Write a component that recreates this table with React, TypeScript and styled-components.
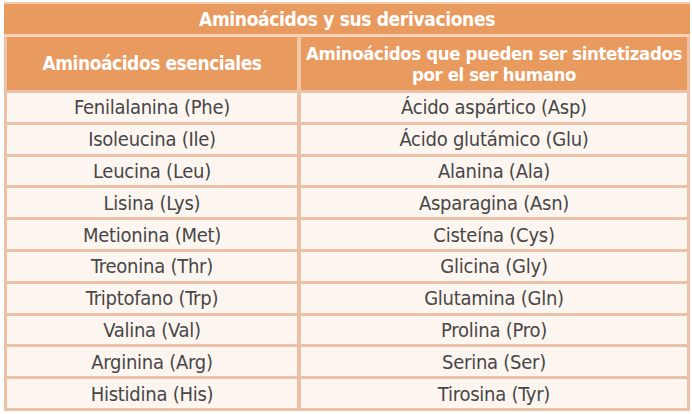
import React from "react";
import styled, { createGlobalStyle } from "styled-components";

const Global = createGlobalStyle`
  html, body { margin: 0; padding: 0; background: #ffffff; }
  body { width: 692px; height: 414px; overflow: hidden; }
`;

const FONT = `"Liberation Sans Narrow", "DejaVu Sans Condensed", "Liberation Sans", sans-serif`;

const Table = styled.div`
  margin: 2px 0 0 4px;
  width: 686px;
  display: grid;
  grid-template-columns: 294px 1fr;
  background: #ebc1a8;
  border: 3px solid #ebc1a8;
  border-top: none;
  box-sizing: border-box;
  font-family: ${FONT};
`;

const Title = styled.div`
  grid-column: 1 / span 2;
  height: 30px;
  background: #e99a5f;
  border-top: 2px solid #f4cdb0;
  border-bottom: 3px solid #f6d3b8;
  margin: 0 -3px;
  padding: 0 3px;
  display: flex;
  align-items: center;
  justify-content: center;
  color: #ffffff;
  font-weight: 700;
  font-size: 19px;
  letter-spacing: -0.35px;
  white-space: nowrap;
`;

const HeadCell = styled.div<{ $left?: boolean; $tight?: boolean }>`
  height: 53px;
  background: #e99a5f;
  border-right: ${(p) => (p.$left ? "4px solid #f3c7a6" : "none")};
  display: flex;
  flex-direction: column;
  align-items: center;
  justify-content: center;
  text-align: center;
  color: #ffffff;
  font-weight: 700;
  font-size: ${(p) => (p.$tight ? "18.5px" : "19px")};
  line-height: 21px;
  letter-spacing: ${(p) => (p.$tight ? "-0.4px" : "-0.45px")};
  white-space: nowrap;
`;

const Cell = styled.div<{ $left?: boolean }>`
  height: 28.8px;
  background: #fdf6f0;
  border-top: 3px solid #ebc1a8;
  border-right: ${(p) => (p.$left ? "4px solid #ebc1a8" : "none")};
  display: flex;
  align-items: center;
  justify-content: center;
  color: #474747;
  font-size: 20px;
  font-weight: 400;
  letter-spacing: -0.25px;
  white-space: nowrap;
`;

const rows: [string, string][] = [
  ["Fenilalanina (Phe)", "Ácido aspártico (Asp)"],
  ["Isoleucina (Ile)", "Ácido glutámico (Glu)"],
  ["Leucina (Leu)", "Alanina (Ala)"],
  ["Lisina (Lys)", "Asparagina (Asn)"],
  ["Metionina (Met)", "Cisteína (Cys)"],
  ["Treonina (Thr)", "Glicina (Gly)"],
  ["Triptofano (Trp)", "Glutamina (Gln)"],
  ["Valina (Val)", "Prolina (Pro)"],
  ["Arginina (Arg)", "Serina (Ser)"],
  ["Histidina (His)", "Tirosina (Tyr)"],
];

export default function App() {
  return (
    <>
      <Global />
      <Table>
        <Title>Aminoácidos y sus derivaciones</Title>
        <HeadCell $left>Aminoácidos esenciales</HeadCell>
        <HeadCell $tight>
          <span>Aminoácidos que pueden ser sintetizados</span>
          <span>por el ser humano</span>
        </HeadCell>
        {rows.map(([a, b]) => (
          <React.Fragment key={a}>
            <Cell $left>{a}</Cell>
            <Cell>{b}</Cell>
          </React.Fragment>
        ))}
      </Table>
    </>
  );
}
